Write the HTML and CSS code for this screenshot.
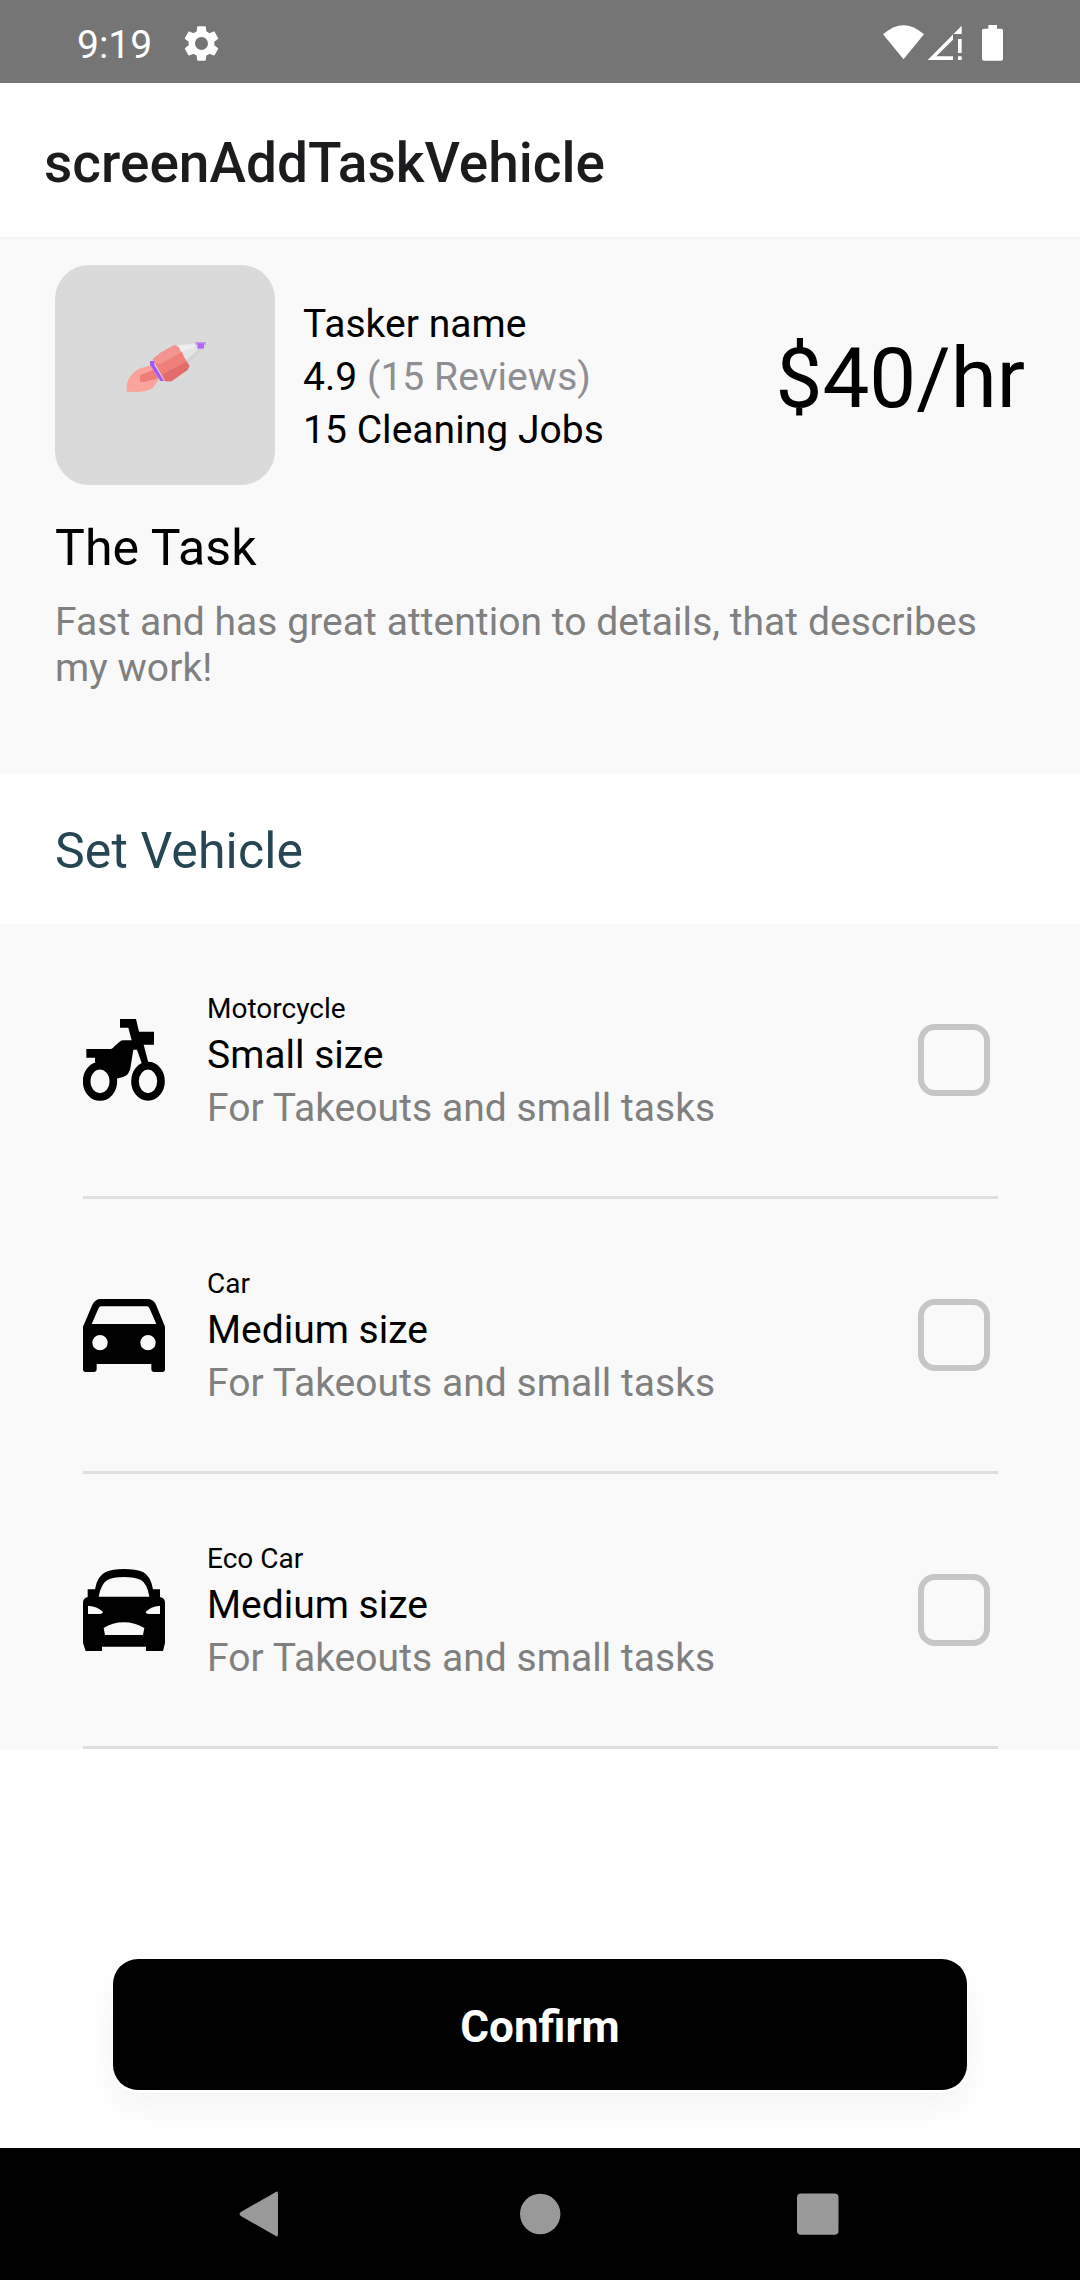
FILE: index.html
```html
<!DOCTYPE html>
<html lang="en">
<head>
<meta charset="utf-8">
<title>screenAddTaskVehicle</title>
<link rel="stylesheet" href="styles.css">
</head>
<body>
<div class="screen">
  <div class="status">
    <span class="clock">9:19</span>
    <svg class="gear" viewBox="0 0 24 24"><path fill="#fff" d="M19.14 12.94c.04-.3.06-.61.06-.94 0-.32-.02-.64-.07-.94l2.03-1.58c.18-.14.23-.41.12-.61l-1.92-3.32c-.12-.22-.37-.29-.59-.22l-2.39.96c-.5-.38-1.03-.7-1.62-.94l-.36-2.54c-.04-.24-.24-.41-.48-.41h-3.84c-.24 0-.43.17-.47.41l-.36 2.54c-.59.24-1.13.57-1.62.94l-2.39-.96c-.22-.08-.47 0-.59.22L2.74 8.87c-.12.21-.08.47.12.61l2.03 1.58c-.05.3-.09.63-.09.94s.02.64.07.94l-2.03 1.58c-.18.14-.23.41-.12.61l1.92 3.32c.12.22.37.29.59.22l2.39-.96c.5.38 1.03.7 1.62.94l.36 2.54c.05.24.24.41.48.41h3.84c.24 0 .44-.17.47-.41l.36-2.54c.59-.24 1.13-.56 1.62-.94l2.39.96c.22.08.47 0 .59-.22l1.92-3.32c.12-.22.07-.47-.12-.61l-2.01-1.58zM12 15.6c-1.98 0-3.6-1.62-3.6-3.6s1.620-3.6 3.6-3.6 3.6 1.620 3.6 3.6-1.620 3.6-3.6 3.6z"/></svg>
    <svg class="signals" viewBox="0 0 363 108"><g fill="#fff">
      <path d="M0 28Q61.500-27 123 28L61.500 103Z"/>
      <path fill-rule="evenodd" d="M134 105L236 2V27H210V105ZM160 94H210V44Z"/>
      <path d="M225 42H236V84H225ZM225 94H236V105H225Z"/>
      <path d="M316 0H342V11H355Q360 11 360 17V101Q360 107 354 107H303Q297 107 297 101V17Q297 11 303 11H316Z"/>
    </g></svg>
  </div>
  <header class="appbar">screenAddTaskVehicle</header>

  <section class="profile">
    <div class="tasker">
      <div class="avatar">
        <svg class="pencil" viewBox="0 0 330 270">
          <path fill="#faa39c" d="M50 215V195Q55 165 85 147L122 136L145 180L128 205Q110 216 80 216Z"/>
          <path fill="#ee7c77" d="M90 166L130 150L145 175L105 185H90Z"/>
          <path fill="#ee8079" d="M128 118L152 98L194 75L209 85L238 138L232 150L184 184H165Z"/>
          <path fill="#f39490" d="M128 118L152 98L194 75L206 84L212 98L150 133L134 130Z"/>
          <path fill="#e26c69" d="M158 163L230 125L239 138L232 150L184 184H165Z"/>
          <path fill="#e4e4e4" d="M205 75L262 68L280 85L238 129L222 112L217 94Z"/>
          <path fill="#efefef" d="M205 76L256 73L250 84L212 95Z"/>
          <path fill="#d2d2d2" d="M270 84L279 86L238 129L228 122Z"/>
          <path fill="#a855f7" d="M120 123H133V134L162 183H151L120 134Z"/>
          <path fill="#c795f3" d="M256 66H288V74H282V86H262V74H256Z"/>
          <path fill="#b266f5" d="M263 70H282V85H263Z"/>
        </svg>
      </div>
      <div class="about">
        <div>Tasker name</div>
        <div>4.9 <span class="reviews">(15 Reviews)</span></div>
        <div>15 Cleaning Jobs</div>
      </div>
      <div class="rate">$40/hr</div>
    </div>
    <h2 class="heading">The Task</h2>
    <p class="description">Fast and has great attention to details, that describes my work!</p>
  </section>

  <h2 class="heading vehicle-heading">Set Vehicle</h2>

  <main class="vehicles">
    <div class="row">
      <svg class="icon" viewBox="0 0 246 246"><g fill="none" stroke="#000" stroke-width="23"><ellipse cx="51" cy="187" rx="40" ry="47"/><ellipse cx="195" cy="187" rx="39" ry="47"/></g>
        <path d="M10 90H84Q90 88 95 81L110 68Q114 64 122 64H146L136 26H111V0H159L168 38H213V77H182L197 134L178 138L162 92H151L142 148Q138 168 122 173L98 180Q94 145 70 134Q54 126 36 130V116H10Z"/></svg>
      <div class="info"><div class="kind">Motorcycle</div><div>Small size</div><div class="note">For Takeouts and small tasks</div></div>
      <span class="box"></span>
    </div>
    <div class="row">
      <svg class="icon car" viewBox="0 0 246 219"><path fill-rule="evenodd" d="M0 83L28 17Q36 0 54 0H192Q212 0 219 17L246 83V211Q246 219 238 219H214Q205 219 205 210V195H41V210Q41 219 32 219H8Q0 219 0 211ZM54 22Q49 22 47 27L26 75H220L199 27Q197 22 192 22ZM28 131a23 23 0 1 0 46 0a23 23 0 1 0-46 0M172 131a23 23 0 1 0 46 0a23 23 0 1 0-46 0"/></svg>
      <div class="info"><div class="kind">Car</div><div>Medium size</div><div class="note">For Takeouts and small tasks</div></div>
      <span class="box"></span>
    </div>
    <div class="row">
      <svg class="icon" viewBox="0 0 246 246"><path fill-rule="evenodd" d="M14 61H36Q43 20 68 9Q88 0 122 0Q160 0 180 9Q203 20 210 61H231V84Q246 88 246 100V222L240 246H189V233H57V246H8L0 222V100Q0 88 14 84ZM47 83H199Q192 43 174 33Q156 24 122 24Q90 24 72 34Q54 46 47 83ZM15 110V135H52Q60 134 60 129Q46 113 15 110ZM231 110V135H196Q188 134 188 129Q202 113 231 110ZM62 177L66 198H180L184 177Q156 160 122 160Q88 160 62 177Z"/></svg>
      <div class="info"><div class="kind">Eco Car</div><div>Medium size</div><div class="note">For Takeouts and small tasks</div></div>
      <span class="box"></span>
    </div>
  </main>

  <div class="actions"><button class="confirm">Confirm</button></div>

  <nav class="navbar">
    <svg viewBox="0 0 48 48"><path fill="#999" d="M43 4V44Q43 48 40 45.500L5.800 26Q3.400 24 5.800 22L40 2.500Q43 0 43 4Z"/></svg>
    <svg viewBox="0 0 48 48"><circle cx="25.200" cy="24" r="20.200" fill="#999"/></svg>
    <svg viewBox="0 0 48 48"><rect x="3" y="3.500" width="41.500" height="41.300" rx="4" fill="#999"/></svg>
  </nav>
</div>
</body>
</html>
```

FILE: styles.css
```css
* { box-sizing: border-box; }
body { margin: 0; background: #fff; font-family: Roboto, "Liberation Sans", sans-serif; font-size: 39px; color: #000; }
.screen { width: 1080px; height: 2280px; display: flex; flex-direction: column; overflow: hidden; }
svg { display: block; flex: none; }

.status { height: 83px; flex: none; background: #757575; color: #fff; display: flex; align-items: flex-start; padding-left: 77px; }
.clock { width: 103px; line-height: 45px; padding-top: 23px; white-space: nowrap; }
.gear { width: 43px; height: 43px; margin-top: 22px; }
.signals { width: 121px; height: 36px; margin: 25px 76px 0 auto; }

.appbar { height: 154px; flex: none; padding: 5px 44px 0; display: flex; align-items: center; font-size: 55px; font-weight: 500; color: #1c1c1e; }

.profile { height: 536px; flex: none; background: #f9f9f9; padding: 28px 55px 0; box-shadow: inset 0 3px 2px -1px #f4f4f4; }
.tasker { display: flex; align-items: center; height: 220px; }
.avatar { width: 220px; height: 220px; border-radius: 34px; background: #dadada; padding: 55px; }
.pencil { width: 110px; height: 90px; }
.about { margin: 4px 0 0 28px; line-height: 53px; letter-spacing: .05px; }
.reviews { color: #8e8e93; }
.rate { margin: 7px 0 0 auto; font-size: 83.5px; line-height: 97px; }
.heading { margin: 0; font-weight: 400; font-size: 50px; line-height: 58px; letter-spacing: .12px; }
.profile .heading { margin-top: 34px; }
.description { margin: 22px 0 0; padding-right: 24px; color: #808080; line-height: 46px; letter-spacing: .05px; }
.vehicle-heading { height: 151px; flex: none; padding: 49px 55px 0; color: #264653; }

.vehicles { flex: none; background: #f9f9f9; padding: 0 82px 0 83px; }
.row { height: 275px; display: flex; align-items: flex-start; border-bottom: 3px solid #dfdfdf; padding-top: 64px; }
.icon { width: 82px; height: 82px; margin-top: 31px; }
.car { height: 73px; margin-top: 36px; }
.info { margin-left: 42px; line-height: 53px; }
.kind { font-size: 28px; line-height: 42px; margin-bottom: -1px; }
.note { color: #808080; letter-spacing: .05px; }
.box { width: 72px; height: 72px; margin: 36px 8px 0 auto; border: 6px solid #c6c6c6; border-radius: 17px; }

.actions { flex: 1; padding: 210px 113px 0; }
.confirm { display: block; width: 854px; height: 131px; border: 0; border-radius: 25px; background: #000; color: #fff; font: 700 44px/1 Roboto, sans-serif; padding: 4px 0 0; box-shadow: 0 3px 0 #fff, 0 16px 40px rgba(0,0,0,.05); }

.navbar { height: 132px; flex: none; background: #000; display: flex; align-items: center; justify-content: space-between; padding: 0 238px 0 235px; }
.navbar svg { width: 48px; height: 48px; }
```
